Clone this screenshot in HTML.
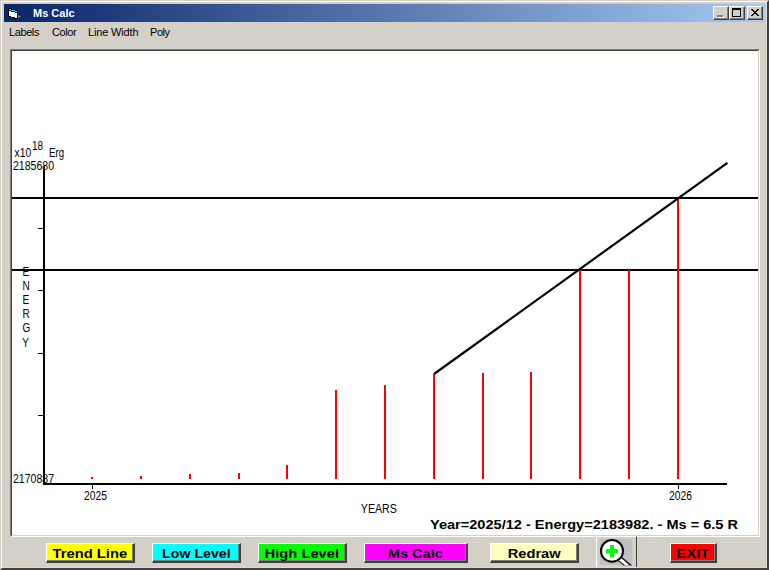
<!DOCTYPE html>
<html lang="en">
<head>
<meta charset="utf-8">
<title>Ms Calc</title>
<style>
html,body{margin:0;padding:0;}
body{width:769px;height:570px;overflow:hidden;background:#d4d0c8;font-family:"Liberation Sans",sans-serif;}
#win{position:absolute;left:0;top:0;width:769px;height:570px;background:#d4d0c8;overflow:hidden;}
.abs{position:absolute;}
/* outer window frame */
#frame{position:absolute;left:0;top:0;width:765px;height:566px;border-style:solid;border-width:2px;border-color:#d4d0c8 #404040 #404040 #d4d0c8;}
#frame2{position:absolute;left:1px;top:1px;width:765px;height:566px;border-style:solid;border-width:1px;border-color:#ffffff #404040 #404040 #ffffff;}
/* title bar */
#title{position:absolute;left:4px;top:4px;width:761px;height:18px;background:linear-gradient(to right,#0a246a 0%,#a6caf0 100%);}
#title .cap{position:absolute;left:29px;top:2px;font-weight:bold;font-size:11px;line-height:14px;color:#fff;white-space:nowrap;letter-spacing:0px;}
.tb{position:absolute;top:2px;width:14px;height:12px;background:#d4d0c8;border-style:solid;border-width:1px;border-color:#fff #404040 #404040 #fff;box-shadow:inset -1px -1px 0 #808080;}
/* menu */
#menu{position:absolute;left:4px;top:22px;width:761px;height:19px;}
#menu span{position:absolute;top:3px;font-size:11px;line-height:14px;color:#000;white-space:nowrap;}
/* canvas */
#canvas{position:absolute;left:10px;top:49px;width:748px;height:486px;background:#fff;border-style:solid;border-width:1px;border-color:#808080 #fff #fff #808080;}
#canvas i{position:absolute;left:0;top:0;width:746px;height:484px;border-style:solid;border-width:1px;border-color:#404040 #d4d0c8 #d4d0c8 #404040;display:block;}
/* buttons */
.btn{position:absolute;top:543px;height:17px;border-style:solid;border-width:1px 2px 2px 1px;border-color:#fff #404040 #404040 #fff;box-shadow:inset -1px -1px 0 #808080;font-weight:bold;font-size:13.4px;line-height:17px;text-align:center;color:#000;white-space:nowrap;}
.btn b{display:inline-block;font-weight:bold;transform-origin:50% 50%;position:relative;top:0.6px;}
</style>
</head>
<body>
<div id="win">
  <div id="frame"></div>
  <div id="frame2"></div>
  <div class="abs" style="left:2px;top:567px;width:765px;height:1px;background:#dedbd4"></div>
  <div class="abs" style="left:766px;top:2px;width:1px;height:566px;background:#dedbd4"></div>

  <div id="title">
    <svg class="abs" style="left:3px;top:3px" width="18" height="14" viewBox="0 0 18 14" shape-rendering="crispEdges">
      <rect x="1" y="1" width="4" height="1" fill="#000"/>
      <rect x="1" y="2" width="1" height="1" fill="#000"/>
      <rect x="2" y="2" width="2" height="1" fill="#00e8e8"/>
      <rect x="4" y="2" width="5" height="1" fill="#000"/>
      <rect x="1" y="3" width="3" height="1" fill="#000"/>
      <rect x="4" y="3" width="4" height="1" fill="#00e8e8"/>
      <rect x="8" y="3" width="3" height="1" fill="#000"/>
      <rect x="1" y="4" width="1" height="1" fill="#000"/>
      <rect x="2" y="4" width="2" height="1" fill="#fff"/>
      <rect x="4" y="4" width="4" height="1" fill="#000"/>
      <rect x="8" y="4" width="2" height="1" fill="#00e8e8"/>
      <rect x="10" y="4" width="1" height="1" fill="#000"/>
      <rect x="1" y="5" width="1" height="1" fill="#000"/>
      <rect x="2" y="5" width="6" height="1" fill="#fff"/>
      <rect x="8" y="5" width="3" height="1" fill="#000"/>
      <rect x="1" y="6" width="1" height="1" fill="#000"/>
      <rect x="2" y="6" width="8" height="1" fill="#fff"/>
      <rect x="10" y="6" width="1" height="1" fill="#000"/>
      <rect x="1" y="7" width="1" height="1" fill="#000"/>
      <rect x="2" y="7" width="8" height="1" fill="#fff"/>
      <rect x="10" y="7" width="1" height="1" fill="#000"/>
      <rect x="1" y="8" width="1" height="1" fill="#000"/>
      <rect x="2" y="8" width="8" height="1" fill="#fff"/>
      <rect x="10" y="8" width="1" height="1" fill="#000"/>
      <rect x="1" y="9" width="3" height="1" fill="#000"/>
      <rect x="4" y="9" width="6" height="1" fill="#fff"/>
      <rect x="10" y="9" width="1" height="1" fill="#000"/>
      <rect x="3" y="10" width="5" height="1" fill="#000"/>
      <rect x="8" y="10" width="2" height="1" fill="#fff"/>
      <rect x="10" y="10" width="1" height="1" fill="#000"/>
      <rect x="7" y="11" width="4" height="1" fill="#000"/>
      <path d="M11 8l3 2h-2l-1 1z" fill="#9aa6bc" shape-rendering="auto"/>
    </svg>
    <div class="cap">Ms Calc</div>
    <div class="tb" style="left:709px">
      <svg class="abs" style="left:1px;top:1px" width="12" height="10" shape-rendering="crispEdges"><rect x="3" y="8" width="6" height="2" fill="#fff"/><rect x="2" y="7" width="6" height="2" fill="#808080"/></svg>
    </div>
    <div class="tb" style="left:725px">
      <svg class="abs" style="left:1px;top:1px" width="12" height="10" shape-rendering="crispEdges"><path d="M1 0h9v9h-9zM2 2v6h7v-6z" fill="#000" fill-rule="evenodd"/></svg>
    </div>
    <div class="tb" style="left:743px">
      <svg class="abs" style="left:1px;top:1px" width="12" height="10" shape-rendering="crispEdges"><path d="M2 1h2v1h1v1h2v-1h1v-1h2v1h-1v1h-1v1h-1v1h1v1h1v1h1v1h-2v-1h-1v-1h-2v1h-1v1h-2v-1h1v-1h1v-1h1v-1h-1v-1h-1v-1h-1z" fill="#000"/></svg>
    </div>
  </div>

  <div id="menu">
    <span style="left:5px;letter-spacing:-0.4px">Labels</span>
    <span style="left:48px;letter-spacing:-0.4px">Color</span>
    <span style="left:84px;letter-spacing:-0.16px">Line Width</span>
    <span style="left:146px;letter-spacing:-0.45px">Poly</span>
  </div>

  <div id="canvas"><i></i></div>

  <svg class="abs" style="left:0;top:0" width="769" height="570" viewBox="0 0 769 570" font-family="'Liberation Sans',sans-serif">
    <g shape-rendering="crispEdges">
      <!-- axes -->
      <rect x="43" y="166" width="2" height="319" fill="#000"/>
      <rect x="43" y="483" width="684" height="2" fill="#000"/>
      <!-- y ticks -->
      <rect x="38" y="228" width="5" height="1" fill="#000"/>
      <rect x="38" y="290" width="5" height="1" fill="#000"/>
      <rect x="38" y="353" width="5" height="1" fill="#000"/>
      <rect x="38" y="415" width="5" height="1" fill="#000"/>
      <!-- x ticks -->
      <rect x="92" y="485" width="1" height="4" fill="#000"/>
      <rect x="678" y="485" width="1" height="4" fill="#000"/>
      <!-- level lines -->
      <rect x="12" y="197" width="746" height="2" fill="#000"/>
      <rect x="12" y="269" width="746" height="2" fill="#000"/>
      <!-- bars -->
      <g fill="#ff0000">
        <rect x="91" y="477" width="2" height="2"/>
        <rect x="140" y="476" width="2" height="3"/>
        <rect x="189" y="474" width="2" height="5"/>
        <rect x="238" y="473" width="2" height="6"/>
        <rect x="286" y="465" width="2" height="14"/>
        <rect x="335" y="390" width="2" height="89"/>
        <rect x="384" y="385" width="2" height="94"/>
        <rect x="433" y="374" width="2" height="105"/>
        <rect x="482" y="373" width="2" height="106"/>
        <rect x="530" y="372" width="2" height="107"/>
        <rect x="579" y="270" width="2" height="209"/>
        <rect x="628" y="270" width="2" height="209"/>
        <rect x="677" y="198" width="2" height="281"/>
      </g>
    </g>
    <!-- trend line -->
    <line x1="434" y1="374" x2="727.4" y2="162.9" stroke="#000" stroke-width="2.2"/>
    <!-- labels -->
    <g font-size="12.5" fill="#000">
      <text x="14.6" y="157" textLength="16.6" lengthAdjust="spacingAndGlyphs">x10</text>
      <text x="32" y="150" textLength="11" lengthAdjust="spacingAndGlyphs">18</text>
      <text x="49" y="157" textLength="15" lengthAdjust="spacingAndGlyphs">Erg</text>
      <text x="13" y="170" textLength="41" lengthAdjust="spacingAndGlyphs">2185680</text>
      <text x="13" y="483" textLength="41" lengthAdjust="spacingAndGlyphs">2170887</text>
      <text x="84" y="500" textLength="23" lengthAdjust="spacingAndGlyphs">2025</text>
      <text x="669" y="500" textLength="23" lengthAdjust="spacingAndGlyphs">2026</text>
      <text x="360.8" y="513" textLength="36" lengthAdjust="spacingAndGlyphs">YEARS</text>
      <g transform="translate(22.6,0) scale(0.8,1)">
        <text x="0" y="276">E</text>
        <text x="0" y="290">N</text>
        <text x="0" y="304">E</text>
        <text x="0" y="318">R</text>
        <text x="0" y="332">G</text>
        <text x="-0.6" y="347">Y</text>
      </g>
    </g>
    <text x="430" y="529" font-size="13.33" font-weight="bold" fill="#000" textLength="308" lengthAdjust="spacingAndGlyphs">Year=2025/12 - Energy=2183982. - Ms = 6.5 R</text>
  </svg>

  <div class="btn" style="left:46px;width:86px;background:#ffff00"><b style="transform:scaleX(1.1)">Trend Line</b></div>
  <div class="btn" style="left:152px;width:86px;background:#00ffff"><b style="transform:scaleX(1.06)">Low Level</b></div>
  <div class="btn" style="left:258px;width:86px;background:#00ff00"><b style="transform:scaleX(1.1)">High Level</b></div>
  <div class="btn" style="left:364px;width:101px;background:#ff00ff"><b style="transform:scaleX(1.09)">Ms Calc</b></div>
  <div class="btn" style="left:490px;width:86px;background:#ffffc0"><b style="transform:scaleX(1.095)">Redraw</b></div>
  <div class="btn" style="left:670px;width:44px;background:#ff0000"><b style="transform:scaleX(1.1)">EXIT</b></div>

  <!-- zoom button -->
  <div class="abs" style="left:596px;top:536px;width:39px;height:30px;border-style:solid;border-width:1px 1px 0 1px;border-color:#fff #404040 #d4d0c8 #fff;"></div>
  <svg class="abs" style="left:596px;top:536px" width="42" height="32" viewBox="0 0 42 32">
    <rect x="4" y="3" width="32" height="26" fill="#c0c0c0" shape-rendering="crispEdges"/>
    <path d="M24.2 19.5 L36 29.6 L27.6 29.6 L20 23.3 Z" fill="#000"/>
    <path d="M24.5 21.3 L33.7 29.6 L29.2 29.6 L21.7 23.6 Z" fill="#fff"/>
    <ellipse cx="16" cy="14.9" rx="11" ry="10.9" fill="#fff" stroke="#000" stroke-width="2"/>
    <rect x="14" y="9" width="4" height="12" fill="#00ff00" shape-rendering="crispEdges"/>
    <rect x="10" y="13" width="12" height="4" fill="#00ff00" shape-rendering="crispEdges"/>
  </svg>
</div>
</body>
</html>
